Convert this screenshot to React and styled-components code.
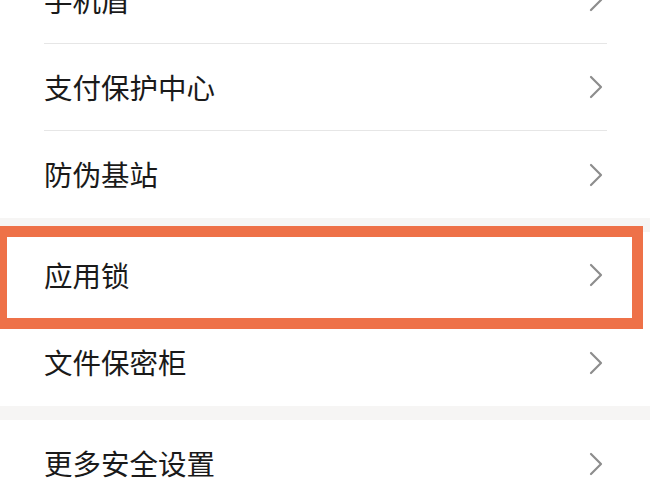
import React from "react"
import styled, { createGlobalStyle } from "styled-components"

const GlobalStyle = createGlobalStyle`
html, body {
margin: 0;
padding: 0;
background: #ffffff;
overflow: hidden;
}
body {
font-family: "Noto Sans CJK SC", "Noto Sans", sans-serif;
}
`

const Page = styled.div`
display: flex;
flex-direction: column;
width: 650px;
margin-top: -43px;
background: #ffffff;
`

const Group = styled.div`
display: flex;
flex-direction: column;
flex-shrink: 0;
background: #ffffff;
`

const Gap = styled.div`
height: 14px;
flex-shrink: 0;
background: #f6f5f4;
`

const Row = styled.div`
position: relative;
height: 87px;
flex-shrink: 0;
padding: 0 43px 0 44px;
display: flex;
`

const RowInner = styled.div`
flex: 1;
display: flex;
align-items: center;
justify-content: space-between;
border-bottom: ${(p) => (p.$last ? "none" : "1px solid #e6e6e6")};
`

const Label = styled.span`
font-size: 28.5px;
line-height: 1;
color: #1a1a1a;
`

const Chevron = styled.svg`
width: 14px;
height: 24px;
margin-right: 4px;
flex-shrink: 0;
`

const Highlight = styled.div`
position: absolute;
left: -4px;
right: 7px;
top: -6px;
bottom: -10px;
border: 11px solid #ee7148;
pointer-events: none;
`

const Arrow = () => (
    <Chevron viewBox="0 0 14 24">
        <polyline
            points="2,2 12,12 2,22"
            fill="none"
            stroke="#8d8d8d"
            strokeWidth="2.2"
            strokeLinecap="round"
            strokeLinejoin="round"
        />
    </Chevron>
)

const Item = ({ label, last, marked }) => (
    <Row>
        <RowInner $last={last}>
            <Label>{label}</Label>
            <Arrow />
        </RowInner>
        {marked && <Highlight />}
    </Row>
)

const App = () => (
    <>
        <GlobalStyle />
        <Page>
            <Group>
                <Item label="手机盾" />
                <Item label="支付保护中心" />
                <Item label="防伪基站" last />
            </Group>
            <Gap />
            <Group>
                <Item label="应用锁" marked />
                <Item label="文件保密柜" last />
            </Group>
            <Gap />
            <Group>
                <Item label="更多安全设置" last />
            </Group>
        </Page>
    </>
)

export default App
